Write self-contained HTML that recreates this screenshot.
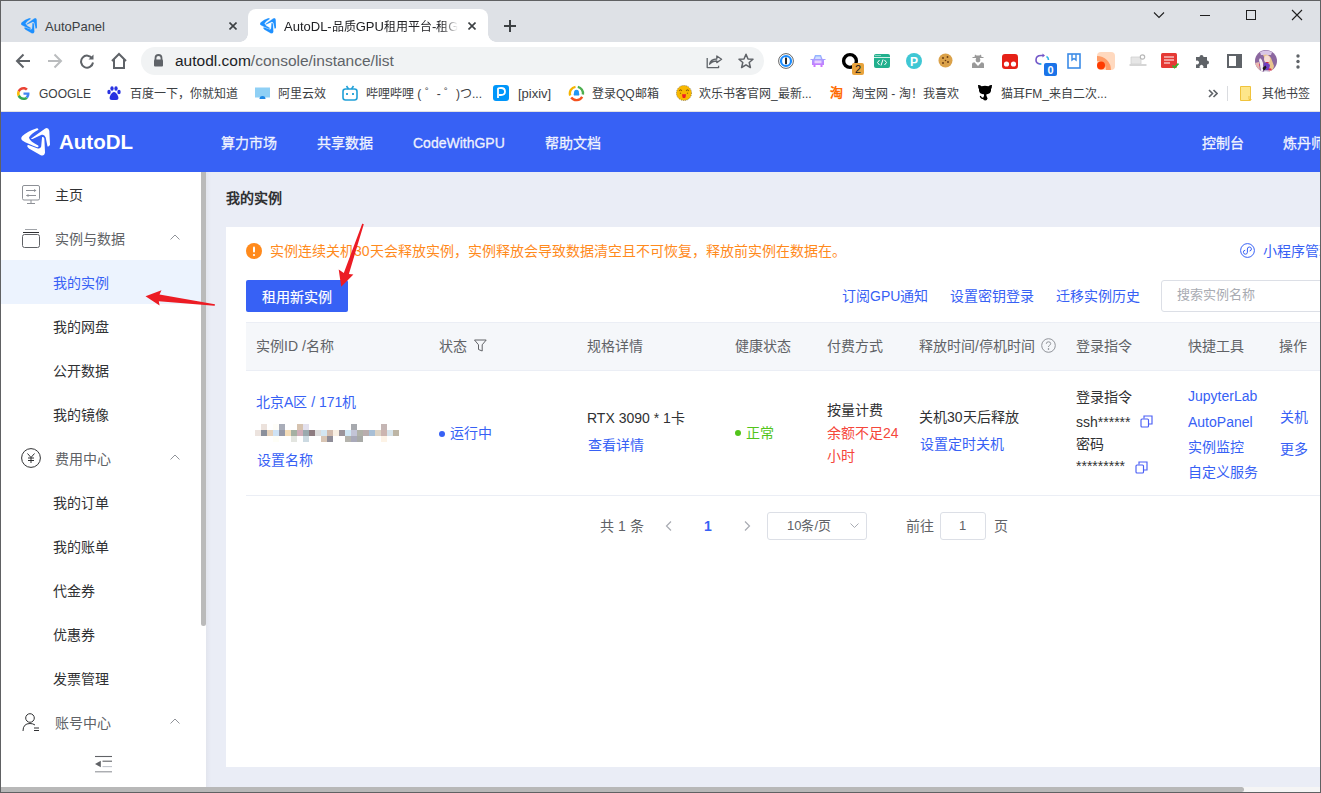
<!DOCTYPE html>
<html lang="zh-CN"><head><meta charset="utf-8">
<style>
*{margin:0;padding:0;box-sizing:border-box}
html,body{width:1321px;height:793px;overflow:hidden;background:#fff;font-family:"Liberation Sans",sans-serif}
.a{position:absolute;white-space:nowrap}
#frame{position:absolute;left:0;top:0;width:1321px;height:793px;border:1px solid #606163;pointer-events:none;z-index:50}
/* tabs */
#tabs{position:absolute;left:0;top:0;width:1321px;height:42px;background:#dee1e6}
.tabtxt{font-size:13px;color:#3c4043;top:19px;line-height:16px}
/* toolbar */
#toolbar{position:absolute;left:0;top:42px;width:1321px;height:36px;background:#fff}
#omni{position:absolute;left:141px;top:47px;width:623px;height:28px;border-radius:14px;background:#f1f3f4}
#bm{position:absolute;left:0;top:78px;width:1321px;height:34px;background:#fff;border-bottom:1px solid #e2e2e2}
.bmt{font-size:12px;color:#3c4043;top:86px;line-height:16px}
/* page */
#hdr{position:absolute;left:0;top:112px;width:1321px;height:60px;background:#3761f5}
.nav{font-size:14px;color:rgba(255,255,255,.88);top:133px;line-height:20px;-webkit-text-stroke:0.35px rgba(255,255,255,.88)}
#side{position:absolute;left:0;top:172px;width:201px;height:621px;background:#fff}
.si{font-size:14px;color:#303133;line-height:20px}
.sg{color:#606266}
#main{position:absolute;left:206px;top:172px;width:1115px;height:621px;background:#eaedf6}
#card{position:absolute;left:226px;top:227px;width:1095px;height:540px;background:#fff}
.t14{font-size:14px;line-height:20px}
.lk{color:#3761f5}
.hd{color:#606266}
.dk{color:#303133}
</style></head><body>
<div id="tabs"></div>
<div id="toolbar"></div>
<div id="omni"></div>
<div id="bm"></div>

<!-- TAB STRIP -->
<svg class="a" style="left:21px;top:18px" width="16" height="16" viewBox="105 90 640 630" fill="#1e90ff" stroke="#1e90ff" stroke-width="10" stroke-linejoin="round"><path d="M440,98 Q485,90 490,128 Q320,215 280,305 Q310,390 485,478 Q505,515 460,512 Q250,440 135,365 Q85,315 135,265 Q250,160 440,98 Z"/><path d="M330,320 L640,100 Q710,70 730,150 L745,460 Q720,515 690,495 L650,300 Q620,220 560,240 L360,330 Q320,340 330,320 Z"/><path d="M245,470 Q230,500 280,540 L540,690 Q620,720 635,630 L620,320 Q600,280 570,290 L550,500 Q530,560 460,535 L270,465 Z"/></svg>
<div class="a tabtxt" style="left:45px">AutoPanel</div>
<svg class="a" style="left:229px;top:22px" width="8" height="8" viewBox="0 0 8 8" stroke="#3c4043" stroke-width="1.6"><path d="M0.5,0.5 L7.5,7.5 M7.5,0.5 L0.5,7.5"/></svg>
<div class="a" style="left:248px;top:9px;width:240px;height:33px;background:#fff;border-radius:8px 8px 0 0"></div>
<div class="a" style="left:240px;top:34px;width:8px;height:8px;background:radial-gradient(circle at 0 0,#dee1e6 7.5px,#fff 8px)"></div>
<div class="a" style="left:488px;top:34px;width:8px;height:8px;background:radial-gradient(circle at 100% 0,#dee1e6 7.5px,#fff 8px)"></div>
<svg class="a" style="left:260px;top:18px" width="16" height="16" viewBox="105 90 640 630" fill="#1e90ff" stroke="#1e90ff" stroke-width="10" stroke-linejoin="round"><path d="M440,98 Q485,90 490,128 Q320,215 280,305 Q310,390 485,478 Q505,515 460,512 Q250,440 135,365 Q85,315 135,265 Q250,160 440,98 Z"/><path d="M330,320 L640,100 Q710,70 730,150 L745,460 Q720,515 690,495 L650,300 Q620,220 560,240 L360,330 Q320,340 330,320 Z"/><path d="M245,470 Q230,500 280,540 L540,690 Q620,720 635,630 L620,320 Q600,280 570,290 L550,500 Q530,560 460,535 L270,465 Z"/></svg>
<div class="a tabtxt" style="left:284px;color:#202124;width:176px;overflow:hidden;-webkit-mask-image:linear-gradient(90deg,#000 158px,transparent 174px)">AutoDL-<span style="font-size:12px">品质</span>GPU<span style="font-size:12px">租用平台</span>-<span style="font-size:12px">租</span>GPU</div>
<svg class="a" style="left:468px;top:22px" width="8" height="8" viewBox="0 0 8 8" stroke="#3c4043" stroke-width="1.6"><path d="M0.5,0.5 L7.5,7.5 M7.5,0.5 L0.5,7.5"/></svg>
<svg class="a" style="left:504px;top:20px" width="12" height="12" viewBox="0 0 12 12" stroke="#3c4043" stroke-width="2"><path d="M6,0 V12 M0,6 H12"/></svg>
<!-- window controls -->
<svg class="a" style="left:1153px;top:11px" width="12" height="8" viewBox="0 0 12 8" fill="none" stroke="#1f1f1f" stroke-width="1.1"><path d="M1,1.5 L6,6.5 L11,1.5"/></svg>
<div class="a" style="left:1200px;top:15px;width:10px;height:1px;background:#1f1f1f"></div>
<div class="a" style="left:1246px;top:10px;width:10px;height:10px;border:1px solid #1f1f1f"></div>
<svg class="a" style="left:1291px;top:9px" width="12" height="12" viewBox="0 0 12 12" stroke="#1f1f1f" stroke-width="1.1"><path d="M1,1 L11,11 M11,1 L1,11"/></svg>
<!-- TOOLBAR -->
<svg class="a" style="left:15px;top:53px" width="16" height="16" viewBox="0 0 16 16" fill="none" stroke="#5f6368" stroke-width="2"><path d="M15,8 H2 M8.5,1.5 L2,8 L8.5,14.5"/></svg>
<svg class="a" style="left:47px;top:53px" width="16" height="16" viewBox="0 0 16 16" fill="none" stroke="#babcbe" stroke-width="2"><path d="M1,8 H14 M7.5,1.5 L14,8 L7.5,14.5"/></svg>
<svg class="a" style="left:79px;top:53px" width="16" height="16" viewBox="0 0 16 16" fill="none" stroke="#5f6368" stroke-width="2"><path d="M13.2,5.5 A6,6 0 1 0 14,9.5"/><path d="M14.5,1.5 V6.5 H9.5 Z" fill="#5f6368" stroke="none"/></svg>
<svg class="a" style="left:110px;top:52px" width="18" height="18" viewBox="0 0 18 18" fill="none" stroke="#5f6368" stroke-width="2"><path d="M2,9 L9,2 L16,9 M4,7.5 V16 H14 V7.5"/></svg>
<svg class="a" style="left:153px;top:54px" width="11" height="13" viewBox="0 0 11 13"><path d="M2.5,6 V4 A3,3 0 0 1 8.5,4 V6" fill="none" stroke="#5f6368" stroke-width="1.8"/><rect x="1" y="5.5" width="9" height="7" rx="1" fill="#5f6368"/></svg>
<div class="a" style="left:175px;top:51px;font-size:15.5px;line-height:20px;color:#5f6368"><span style="color:#202124">autodl.com</span>/console/instance/list</div>
<svg class="a" style="left:705px;top:54px" width="18" height="15" viewBox="0 0 18 15" fill="none" stroke="#5f6368" stroke-width="1.3" stroke-linejoin="round"><path d="M2.2,3.9 V13.6 H13.6 V11.8"/><path d="M4.6,10.2 Q5.5,5.2 11.8,5 V2 L16.6,5.3 L11.8,8.6 V7 Q7,7 4.6,10.2 Z"/></svg>
<svg class="a" style="left:738px;top:53px" width="16" height="16" viewBox="0 0 16 16" fill="none" stroke="#5f6368" stroke-width="1.5" stroke-linejoin="round"><path d="M8,1.2 L10,6 L15,6.3 L11.2,9.5 L12.4,14.5 L8,11.8 L3.6,14.5 L4.8,9.5 L1,6.3 L6,6 Z"/></svg>
<!-- extensions -->
<svg class="a" style="left:778px;top:53px" width="16" height="16" viewBox="0 0 16 16"><circle cx="8" cy="8" r="7.4" fill="#fff" stroke="#555" stroke-width="0.9"/><circle cx="8" cy="8" r="5" fill="#fff" stroke="#1a8cff" stroke-width="2.2"/><rect x="7.1" y="4.6" width="1.8" height="6.6" fill="#111"/></svg>
<svg class="a" style="left:810px;top:54px" width="16" height="14" viewBox="0 0 16 14"><defs><linearGradient id="cg" x1="0" y1="0" x2="0" y2="1"><stop offset="0" stop-color="#8fb8ff"/><stop offset="1" stop-color="#d070ff"/></linearGradient></defs><path d="M3.5,5 L5,1 H11 L12.5,5 H15.5 V6 H14 V11 H12.5 V13 H10.5 V11 H5.5 V13 H3.5 V11 H2 V6 H0.5 V5 Z" fill="url(#cg)"/><path d="M5,5 L5.8,2.5 H10.2 L11,5 Z" fill="#cfe0ff"/><rect x="4.5" y="6.5" width="7" height="2.8" fill="#e9d0ff"/></svg>
<svg class="a" style="left:841px;top:51px" width="23" height="24" viewBox="0 0 23 24"><circle cx="9" cy="10" r="6.4" fill="none" stroke="#000" stroke-width="3.4"/><rect x="11" y="12" width="12" height="12" rx="2" fill="#e8a33d"/><text x="17" y="22" font-size="11" text-anchor="middle" fill="#1a1a1a" font-family="Liberation Sans">2</text></svg>
<svg class="a" style="left:874px;top:53px" width="16" height="16" viewBox="0 0 16 16"><rect x="0" y="1" width="16" height="14" rx="2" fill="#21b08d"/><rect x="0" y="4" width="16" height="0.8" fill="#fff"/><circle cx="2" cy="2.5" r=".6" fill="#fff"/><circle cx="4" cy="2.5" r=".6" fill="#fff"/><circle cx="6" cy="2.5" r=".6" fill="#fff"/><path d="M5.5,7 L3.5,9.5 L5.5,12 M10.5,7 L12.5,9.5 L10.5,12 M9,6.5 L7,12.5" fill="none" stroke="#fff" stroke-width="1"/></svg>
<svg class="a" style="left:906px;top:53px" width="16" height="16" viewBox="0 0 16 16"><circle cx="8" cy="8" r="8" fill="#3fc7d4"/><text x="8" y="12.5" font-size="12" font-weight="bold" text-anchor="middle" fill="#fff" font-family="Liberation Sans">P</text></svg>
<svg class="a" style="left:938px;top:53px" width="15" height="15" viewBox="0 0 15 15"><circle cx="7.5" cy="7.5" r="7" fill="#dba24a"/><circle cx="5" cy="5" r="1" fill="#6b3d14"/><circle cx="9.5" cy="4" r=".9" fill="#6b3d14"/><circle cx="10" cy="9" r="1" fill="#6b3d14"/><circle cx="5" cy="10" r="1" fill="#6b3d14"/><circle cx="7.5" cy="7.5" r=".8" fill="#6b3d14"/></svg>
<svg class="a" style="left:971px;top:54px" width="14" height="14" viewBox="0 0 14 14" fill="#999"><path d="M4,0.5 L5.5,1.5 H8.5 L10,0.5 L10.5,3 H12.5 V4 H1.5 V3 H3.5 Z"/><circle cx="7" cy="6" r="2.4"/><path d="M1,14 V10 Q1,8.5 3.5,8.3 L7,12 L10.5,8.3 Q13,8.5 13,10 V14 Z"/></svg>
<svg class="a" style="left:1002px;top:54px" width="16" height="15" viewBox="0 0 16 15"><rect x="0" y="0" width="16" height="15" rx="3" fill="#e62117"/><circle cx="4.5" cy="10" r="2.6" fill="#fff"/><circle cx="11.5" cy="10" r="2.6" fill="#fff"/></svg>
<svg class="a" style="left:1034px;top:52px" width="23" height="24" viewBox="0 0 23 24"><path d="M9,3.5 H7 Q2,3.5 2,8 Q2,11.5 6,12" fill="none" stroke="#7357c8" stroke-width="1.6"/><path d="M8.5,1.5 L11,3.5 L8.5,5.5 Z" fill="#7357c8"/><path d="M12.5,4.5 Q14.5,5.5 14.5,8" fill="none" stroke="#2bb5e8" stroke-width="1.6"/><circle cx="6.5" cy="12" r="1.1" fill="#2bb5e8"/><rect x="10" y="11" width="13" height="13" rx="2" fill="#1a73e8"/><text x="16.5" y="22" font-size="11" font-weight="bold" text-anchor="middle" fill="#fff" font-family="Liberation Sans">0</text></svg>
<svg class="a" style="left:1067px;top:53px" width="14" height="16" viewBox="0 0 14 16"><rect x="1" y="1" width="12" height="14" fill="none" stroke="#3b8be6" stroke-width="1.6"/><path d="M5,1 V7 L7,5.5 L9,7 V1" fill="none" stroke="#3b8be6" stroke-width="1.4"/></svg>
<svg class="a" style="left:1097px;top:52px" width="18" height="18" viewBox="0 0 18 18"><rect x="0" y="0" width="18" height="18" rx="4" fill="#ffd9bf"/><path d="M0,4 A14,14 0 0 1 14,18 H9 A9,9 0 0 0 0,9 Z" fill="#ff9c66"/><circle cx="4" cy="13.5" r="4" fill="#ff3b00"/></svg>
<svg class="a" style="left:1129px;top:54px" width="18" height="14" viewBox="0 0 18 14"><path d="M2,3 H12 V10 H2 Z" fill="#e6e6e6" stroke="#d0d0d0" stroke-width=".8"/><path d="M0.5,10 H17.5 V12 H0.5 Z" fill="#d6d6d6"/><circle cx="13.5" cy="3" r="2.2" fill="#fff" stroke="#b8b8b8" stroke-width="1.2"/></svg>
<svg class="a" style="left:1161px;top:53px" width="18" height="16" viewBox="0 0 18 16"><rect x="0" y="0" width="16" height="15" rx="1.5" fill="#e53935"/><path d="M3,4 H13 M3,7 H13 M3,10 H9" stroke="#fff" stroke-width="1.2"/><path d="M11.5,12.5 L13.5,14.5 L17.5,10.5" fill="none" stroke="#2eb82e" stroke-width="1.6"/></svg>
<svg class="a" style="left:1194px;top:53px" width="16" height="16" viewBox="0 0 16 16"><path d="M2,4 H5.5 A2,2 0 1 1 9.5,4 H13 V7.5 A2,2 0 1 1 13,11.5 V15 H9.2 A2,2 0 1 0 5.8,15 H2 V11.2 A2,2 0 1 0 2,7.8 Z" fill="#5f6368"/></svg>
<svg class="a" style="left:1227px;top:54px" width="15" height="14" viewBox="0 0 15 14"><rect x="1" y="1" width="13" height="12" fill="none" stroke="#5f6368" stroke-width="2"/><rect x="9" y="1" width="5" height="12" fill="#5f6368"/></svg>
<svg class="a" style="left:1255px;top:50px" width="22" height="22" viewBox="0 0 22 22"><defs><clipPath id="avc"><circle cx="11" cy="11" r="11"/></clipPath></defs><g clip-path="url(#avc)"><rect width="22" height="22" fill="#8b679f"/><path d="M5,2 Q11,-1 17,2 L16,5 H6 Z" fill="#d9c6e6"/><path d="M8,5 Q13,3 16,8 L19,16 Q18,21 15,22 L13,14 Z" fill="#e8c48e"/><ellipse cx="12" cy="9" rx="3" ry="3.6" fill="#f6dcd2"/><rect x="11" y="12" width="2.6" height="1" fill="#d22a4a"/><path d="M9,13 Q13,12 15,15 L14,20 H9 Z" fill="#6f3fc0"/><path d="M5,8 Q7,9 8,13 L8,21 L6,21 Q5,14 4,10 Z" fill="#f4f0f4"/><path d="M7.5,18 L10.5,15.5 L11.5,17.5 L9,21 Z" fill="#1a1a1a"/><circle cx="3.5" cy="15" r="1.6" fill="#d8204a"/><circle cx="15" cy="20" r="1.7" fill="#e0284a"/><path d="M9,22 H17 V20.5 H9 Z" fill="#f0f0f8"/><path d="M0,13 L4,12 L5,22 H0 Z" fill="#e8b8b0"/></g></svg>
<svg class="a" style="left:1295px;top:54px" width="6" height="15" viewBox="0 0 6 15" fill="#5f6368"><circle cx="3" cy="2" r="1.7"/><circle cx="3" cy="7.5" r="1.7"/><circle cx="3" cy="13" r="1.7"/></svg>
<!-- BOOKMARKS -->
<svg class="a" style="left:17px;top:87px" width="13" height="13" viewBox="0 0 48 48"><path fill="#EA4335" d="M24 9.5c3.5 0 6.6 1.2 9.1 3.6l6.8-6.8C35.8 2.5 30.3 0 24 0 14.6 0 6.6 5.4 2.6 13.3l7.9 6.1C12.4 13.7 17.7 9.5 24 9.5z"/><path fill="#4285F4" d="M46.1 24.6c0-1.6-.1-3.1-.4-4.6H24v9h12.4c-.5 2.9-2.2 5.3-4.6 6.9l7.4 5.7c4.3-4 6.9-9.9 6.9-17z"/><path fill="#FBBC05" d="M10.5 28.6c-.5-1.4-.8-3-.8-4.6s.3-3.2.8-4.6l-7.9-6.1C1 16.5 0 20.1 0 24s1 7.5 2.6 10.7l7.9-6.1z"/><path fill="#34A853" d="M24 48c6.5 0 11.9-2.1 15.9-5.8l-7.4-5.7c-2.1 1.4-4.8 2.2-8.5 2.2-6.3 0-11.6-4.2-13.5-9.9l-7.9 6.1C6.6 42.6 14.6 48 24 48z"/></svg>
<div class="a bmt" style="left:39px">GOOGLE</div>
<svg class="a" style="left:107px;top:86px" width="14" height="15" viewBox="0 0 14 15" fill="#2932e1"><ellipse cx="2" cy="6" rx="1.7" ry="2.2"/><ellipse cx="5" cy="2.5" rx="1.7" ry="2.2"/><ellipse cx="9" cy="2.5" rx="1.7" ry="2.2"/><ellipse cx="12" cy="6" rx="1.7" ry="2.2"/><path d="M7,6 Q9,6 11,10 Q12.5,14 9,14 H5 Q1.5,14 3,10 Q5,6 7,6 Z"/></svg>
<div class="a bmt" style="left:130px">百度一下，你就知道</div>
<svg class="a" style="left:255px;top:87px" width="15" height="13" viewBox="0 0 15 13"><rect x="0" y="0.5" width="15" height="10" fill="#8fd0f5"/><path d="M4.5,12 A3,3 0 0 1 10.5,12 Z" fill="#1e88e5"/></svg>
<div class="a bmt" style="left:278px">阿里云效</div>
<svg class="a" style="left:342px;top:85px" width="16" height="16" viewBox="0 0 16 16" fill="none" stroke="#20a0d8" stroke-width="1.6"><rect x="1" y="4" width="14" height="11" rx="2.5"/><path d="M4.5,1 L6.5,4 M11.5,1 L9.5,4"/><path d="M5,8 V10 M11,8 V10" stroke-width="1.8"/></svg>
<div class="a bmt" style="left:366px">哔哩哔哩 ( ゜- ゜)つ...</div>
<svg class="a" style="left:493px;top:85px" width="16" height="16" viewBox="0 0 16 16"><rect width="16" height="16" rx="3" fill="#0096fa"/><path d="M5,13 V4 Q5,3 8,3 Q12,3 12,6.5 Q12,10 8,10 H6" fill="none" stroke="#fff" stroke-width="1.8"/></svg>
<div class="a bmt" style="left:518px;font-size:13px">[pixiv]</div>
<svg class="a" style="left:568px;top:85px" width="17" height="17" viewBox="0 0 17 17" fill="none" stroke-width="2.4"><path d="M2.2,10.5 A6.6,6.6 0 0 1 7.5,1.9" stroke="#f5b400"/><path d="M9.8,1.9 A6.6,6.6 0 0 1 14.9,9.5" stroke="#4caf50"/><path d="M14.2,11.8 A6.6,6.6 0 0 1 3.2,12.5" stroke="#f4511e"/><path d="M8.5,4.8 Q11,4.8 11,8 Q11.8,9.5 11,10.5 H6 Q5.2,9.5 6,8 Q6,4.8 8.5,4.8 Z" fill="#2196f3" stroke="none"/></svg>
<div class="a bmt" style="left:592px">登录QQ邮箱</div>
<svg class="a" style="left:676px;top:85px" width="16" height="16" viewBox="0 0 16 16"><circle cx="8" cy="8" r="7.6" fill="#f8b800" stroke="#5a4a20" stroke-width=".6" stroke-dasharray="1 1"/><path d="M3.3,6 Q4.5,3.5 5.8,6 M10.2,6 Q11.5,3.5 12.7,6" fill="none" stroke="#8a5a00" stroke-width="1.1"/><circle cx="4.5" cy="8.2" r=".7" fill="#a07000"/><circle cx="11.5" cy="8.2" r=".7" fill="#a07000"/><path d="M6,9.3 H10 L9.5,12.5 Q8,13.6 6.5,12.5 Z" fill="#ee1c25"/></svg>
<div class="a bmt" style="left:699px">欢乐书客官网_最新...</div>
<div class="a" style="left:830px;top:85px;font-size:13px;line-height:16px;color:#ff6a00;font-weight:bold">淘</div>
<div class="a bmt" style="left:852px">淘宝网 - 淘！我喜欢</div>
<svg class="a" style="left:977px;top:84px" width="16" height="17" viewBox="0 0 16 17" fill="#000"><path d="M1,1 Q3,0.8 4.5,2.2 Q8,1.5 11.5,2.2 Q13,0.8 15,1 Q15,4 14,5 Q15,10 8,10.5 Q1,10 2,5 Q1,4 1,1 Z"/><rect x="7" y="10" width="2.4" height="3"/><ellipse cx="8.2" cy="14.2" rx="2.2" ry="2.3"/><path d="M3.2,12 Q4,14.5 6.5,14.5" fill="none" stroke="#000" stroke-width="1.1"/></svg>
<div class="a bmt" style="left:1001px">猫耳FM_来自二次...</div>
<svg class="a" style="left:1208px;top:89px" width="10" height="9" viewBox="0 0 10 9" fill="none" stroke="#5f6368" stroke-width="1.6"><path d="M1,1 L4.5,4.5 L1,8 M5.5,1 L9,4.5 L5.5,8"/></svg>
<div class="a" style="left:1227px;top:86px;width:1px;height:15px;background:#dadce0"></div>
<svg class="a" style="left:1240px;top:86px" width="12" height="15" viewBox="0 0 12 15"><path d="M0.5,0.5 H10.5 V14.5 H0.5 Z" fill="#fde68a" stroke="#f0c33c" stroke-width="1"/><path d="M9,10 V13.5 H11.5" fill="none" stroke="#f0c33c" stroke-width="1"/></svg>
<div class="a bmt" style="left:1262px">其他书签</div>


<div id="hdr"></div>
<svg class="a" style="left:21px;top:128px" width="29" height="28.6" viewBox="105 90 640 630" fill="#fff"><path d="M440,98 Q485,90 490,128 Q320,215 280,305 Q310,390 485,478 Q505,515 460,512 Q250,440 135,365 Q85,315 135,265 Q250,160 440,98 Z"/><path d="M330,320 L640,100 Q710,70 730,150 L745,460 Q720,515 690,495 L650,300 Q620,220 560,240 L360,330 Q320,340 330,320 Z"/><path d="M245,470 Q230,500 280,540 L540,690 Q620,720 635,630 L620,320 Q600,280 570,290 L550,500 Q530,560 460,535 L270,465 Z"/></svg>
<div class="a" style="left:59px;top:130px;font-size:20.5px;line-height:24px;font-weight:bold;color:#fff">AutoDL</div>
<div class="a nav" style="left:221px">算力市场</div>
<div class="a nav" style="left:317px">共享数据</div>
<div class="a nav" style="left:413px">CodeWithGPU</div>
<div class="a nav" style="left:545px">帮助文档</div>
<div class="a nav" style="left:1202px">控制台</div>
<div class="a nav" style="left:1283px">炼丹师</div>
<div id="side"></div>
<div class="a" style="left:1px;top:260px;width:200px;height:44px;background:#ecf3fe"></div>
<svg class="a" style="left:22px;top:185px" width="18" height="19" viewBox="0 0 18 19" fill="none" stroke="#8d9096" stroke-width="1"><rect x="0.5" y="0.5" width="17" height="14.5" rx="1.5"/><path d="M9,15 V18 M5,18.5 H13"/><path d="M4,5.5 H13.5 M4.5,10.5 H14"/><path d="M12,4 L14.5,5.5 L12,7 Z M6.5,9 L4,10.5 L6.5,12 Z" fill="#8d9096" stroke="none"/></svg><svg class="a" style="left:22px;top:228px" width="18" height="20" viewBox="0 0 18 20" fill="none" stroke-width="1"><path d="M3,1.5 H15" stroke="#a0a3a8"/><path d="M1,4.5 H17" stroke="#303133"/><rect x="0.5" y="6.5" width="17" height="13" rx="2" stroke="#606266"/></svg><svg class="a" style="left:21px;top:448px" width="20" height="20" viewBox="0 0 20 20" fill="none" stroke="#303133" stroke-width="1"><circle cx="10" cy="10" r="9.4"/><path d="M6.5,5.5 L10,9.5 L13.5,5.5 M10,9.5 V15 M7,10 H13 M7,12.5 H13"/></svg><svg class="a" style="left:22px;top:713px" width="19" height="19" viewBox="0 0 19 19" fill="none" stroke="#303133" stroke-width="1"><circle cx="8" cy="5" r="4.3"/><path d="M1,18 Q1,10.5 8,10.5 Q11,10.5 13,12"/><path d="M12,15 H17 M12,17.5 H17"/></svg>
<svg class="a" style="left:170px;top:234px" width="10" height="6" viewBox="0 0 10 6" fill="none" stroke="#909399" stroke-width="1"><path d="M0.5,5.5 L5,1 L9.5,5.5"/></svg><svg class="a" style="left:170px;top:454px" width="10" height="6" viewBox="0 0 10 6" fill="none" stroke="#909399" stroke-width="1"><path d="M0.5,5.5 L5,1 L9.5,5.5"/></svg><svg class="a" style="left:170px;top:718px" width="10" height="6" viewBox="0 0 10 6" fill="none" stroke="#909399" stroke-width="1"><path d="M0.5,5.5 L5,1 L9.5,5.5"/></svg>
<div class="a si" style="left:55px;top:185px">主页</div><div class="a si sg" style="left:55px;top:229px">实例与数据</div><div class="a si" style="left:53px;top:273px;color:#3761f5">我的实例</div><div class="a si" style="left:53px;top:317px">我的网盘</div><div class="a si" style="left:53px;top:361px">公开数据</div><div class="a si" style="left:53px;top:405px">我的镜像</div><div class="a si sg" style="left:55px;top:449px">费用中心</div><div class="a si" style="left:53px;top:493px">我的订单</div><div class="a si" style="left:53px;top:537px">我的账单</div><div class="a si" style="left:53px;top:581px">代金券</div><div class="a si" style="left:53px;top:625px">优惠券</div><div class="a si" style="left:53px;top:669px">发票管理</div><div class="a si sg" style="left:55px;top:713px">账号中心</div>
<svg class="a" style="left:95px;top:755px" width="17" height="18" viewBox="0 0 17 18"><path d="M0,1.5 H17" stroke="#606266" stroke-width="1.1"/><path d="M7.5,6.2 H17" stroke="#606266" stroke-width="1.1"/><path d="M7.5,11.6 H17" stroke="#c0c4cc" stroke-width="1.1"/><path d="M0,16.8 H17" stroke="#909399" stroke-width="1.1"/><path d="M0,9 L5.8,5.8 V12.2 Z" fill="#606266"/></svg>
<div class="a" style="left:201px;top:172px;width:5px;height:454px;background:#bababa;border-radius:0 0 3px 3px"></div>
<div id="main"></div>
<div class="a" style="left:206px;top:172px;width:5px;height:621px;background:linear-gradient(90deg,rgba(0,0,0,.035),rgba(0,0,0,0))"></div>
<div class="a" style="left:226px;top:188px;font-size:14px;line-height:20px;font-weight:bold;color:#303133">我的实例</div>
<div id="card"></div>
<svg class="a" style="left:246px;top:243px" width="16" height="16" viewBox="0 0 16 16"><circle cx="8" cy="8" r="8" fill="#ff8a1c"/><rect x="7" y="3.5" width="2" height="6" rx="1" fill="#fff"/><circle cx="8" cy="12" r="1.1" fill="#fff"/></svg>
<div class="a t14" style="left:270px;top:241px;color:#ff8a1c">实例连续关机30天会释放实例，实例释放会导致数据清空且不可恢复，释放前实例在数据在。</div>
<svg class="a" style="left:1240px;top:243px" width="15" height="15" viewBox="0 0 15 15" fill="none" stroke="#3761f5" stroke-width="1"><circle cx="7.5" cy="7.5" r="6.9"/><path d="M5.2,7.2 A2,2 0 1 0 7.4,9.2 V6 A2,2 0 1 1 9.6,8"/></svg>
<div class="a t14 lk" style="left:1263px;top:241px">小程序管理</div>
<div class="a" style="left:246px;top:280px;width:102px;height:32px;background:#3761f5;border-radius:2px"></div>
<div class="a t14" style="left:262px;top:287px;color:#fff;-webkit-text-stroke:0.2px #fff">租用新实例</div>
<div class="a t14 lk" style="left:842px;top:286px">订阅GPU通知</div>
<div class="a t14 lk" style="left:950px;top:286px">设置密钥登录</div>
<div class="a t14 lk" style="left:1056px;top:286px">迁移实例历史</div>
<div class="a" style="left:1161px;top:280px;width:170px;height:32px;border:1px solid #dcdfe6;border-radius:3px;background:#fff"></div>
<div class="a" style="left:1177px;top:285px;font-size:13px;line-height:20px;color:#a8abb2">搜索实例名称</div>
<!-- table -->
<div class="a" style="left:246px;top:322px;width:1080px;height:49px;background:#f5f7fa;border-top:1px solid #ebeef5;border-bottom:1px solid #ebeef5"></div>
<div class="a t14 hd" style="left:256px;top:336px">实例ID /名称</div>
<div class="a t14 hd" style="left:439px;top:336px">状态</div>
<svg class="a" style="left:474px;top:339px" width="13" height="13" viewBox="0 0 13 13" fill="none" stroke="#606266" stroke-width="1"><path d="M0.5,1 H12.2 L8.2,5.8 V12 L4.5,10.5 V5.8 Z" stroke-linejoin="round"/></svg>
<div class="a t14 hd" style="left:587px;top:336px">规格详情</div>
<div class="a t14 hd" style="left:735px;top:336px">健康状态</div>
<div class="a t14 hd" style="left:827px;top:336px">付费方式</div>
<div class="a t14 hd" style="left:919px;top:336px">释放时间/停机时间</div>
<svg class="a" style="left:1041px;top:338px" width="15" height="15" viewBox="0 0 15 15" fill="none" stroke="#909399" stroke-width="1"><circle cx="7.5" cy="7.5" r="6.8"/><path d="M5.3,5.8 Q5.3,3.8 7.5,3.8 Q9.7,3.8 9.7,5.6 Q9.7,6.8 8.3,7.5 Q7.5,7.9 7.5,9"/><circle cx="7.5" cy="11" r=".5" fill="#909399"/></svg>
<div class="a t14 hd" style="left:1076px;top:336px">登录指令</div>
<div class="a t14 hd" style="left:1188px;top:336px">快捷工具</div>
<div class="a t14 hd" style="left:1279px;top:336px">操作</div>
<div class="a" style="left:246px;top:495px;width:1080px;height:1px;background:#ebeef5"></div>
<div class="a t14 lk" style="left:256px;top:392px">北京A区 / 171机</div>
<svg class="a" style="left:255px;top:424px" width="144" height="18" viewBox="0 0 144 18" shape-rendering="crispEdges"><rect x="6" y="0" width="6" height="6" fill="#ece2dc"/><rect x="18" y="0" width="6" height="6" fill="#fefdf8"/><rect x="24" y="0" width="6" height="6" fill="#a9adb9"/><rect x="42" y="0" width="6" height="6" fill="#d6c3b0"/><rect x="48" y="0" width="6" height="6" fill="#e3e1ee"/><rect x="96" y="0" width="6" height="6" fill="#a7a9ae"/><rect x="126" y="0" width="6" height="6" fill="#c5b6b4"/><rect x="0" y="6" width="6" height="6" fill="#ece3de"/><rect x="6" y="6" width="6" height="6" fill="#8a8f9b"/><rect x="12" y="6" width="6" height="6" fill="#e6d2bb"/><rect x="18" y="6" width="6" height="6" fill="#cfe3f5"/><rect x="24" y="6" width="6" height="6" fill="#9699a8"/><rect x="30" y="6" width="6" height="6" fill="#f3dcb8"/><rect x="36" y="6" width="6" height="6" fill="#a5b0a3"/><rect x="42" y="6" width="6" height="6" fill="#cfadb9"/><rect x="48" y="6" width="6" height="6" fill="#9aa9ae"/><rect x="54" y="6" width="6" height="6" fill="#8d7b80"/><rect x="60" y="6" width="6" height="6" fill="#dcdcdc"/><rect x="66" y="6" width="6" height="6" fill="#d3e6f2"/><rect x="72" y="6" width="6" height="6" fill="#d2bcae"/><rect x="78" y="6" width="6" height="6" fill="#f8efe3"/><rect x="84" y="6" width="6" height="6" fill="#9a949b"/><rect x="90" y="6" width="6" height="6" fill="#cfe6f4"/><rect x="96" y="6" width="6" height="6" fill="#c3c4d6"/><rect x="102" y="6" width="6" height="6" fill="#b0b1a8"/><rect x="108" y="6" width="6" height="6" fill="#b9adad"/><rect x="114" y="6" width="6" height="6" fill="#a8bfd6"/><rect x="120" y="6" width="6" height="6" fill="#ddd3c4"/><rect x="126" y="6" width="6" height="6" fill="#ccb5b0"/><rect x="132" y="6" width="6" height="6" fill="#d6e3ea"/><rect x="138" y="6" width="6" height="6" fill="#bdb5a5"/><rect x="18" y="12" width="6" height="6" fill="#fefef7"/><rect x="36" y="12" width="6" height="6" fill="#e3e5e0"/><rect x="48" y="12" width="6" height="6" fill="#ccdae2"/><rect x="66" y="12" width="6" height="6" fill="#d8c5b4"/><rect x="72" y="12" width="6" height="6" fill="#8f8d98"/><rect x="90" y="12" width="6" height="6" fill="#b4b3ad"/><rect x="96" y="12" width="6" height="6" fill="#a9a9b9"/><rect x="102" y="12" width="6" height="6" fill="#a8aaa7"/><rect x="126" y="12" width="6" height="6" fill="#fdf3e6"/></svg>
<div class="a t14 lk" style="left:257px;top:450px">设置名称</div>
<div class="a" style="left:439px;top:431px;width:6px;height:6px;border-radius:50%;background:#3761f5"></div>
<div class="a t14 lk" style="left:450px;top:423px">运行中</div>
<div class="a t14 dk" style="left:587px;top:408px">RTX 3090 * 1卡</div>
<div class="a t14 lk" style="left:588px;top:435px">查看详情</div>
<div class="a" style="left:735px;top:430px;width:6px;height:6px;border-radius:50%;background:#52c41a"></div>
<div class="a t14" style="left:746px;top:423px;color:#52c41a">正常</div>
<div class="a t14 dk" style="left:827px;top:400px">按量计费</div>
<div class="a t14" style="left:827px;top:423px;color:#f5473b">余额不足24</div>
<div class="a t14" style="left:827px;top:446px;color:#f5473b">小时</div>
<div class="a t14 dk" style="left:919px;top:407px">关机30天后释放</div>
<div class="a t14 lk" style="left:920px;top:434px">设置定时关机</div>
<div class="a t14 dk" style="left:1076px;top:387px">登录指令</div>
<div class="a t14 dk" style="left:1076px;top:412px">ssh******</div>
<div class="a t14 dk" style="left:1076px;top:434px">密码</div>
<div class="a t14 dk" style="left:1076px;top:456px">*********</div>
<svg class="a" style="left:1140px;top:415px" width="13" height="13" viewBox="0 0 13 13" fill="none" stroke="#4a5ff5" stroke-width="1.15"><rect x="1" y="4" width="7.5" height="8" rx="1"/><path d="M4,3.5 V1 H12 V9 H9"/></svg>
<svg class="a" style="left:1135px;top:461px" width="13" height="13" viewBox="0 0 13 13" fill="none" stroke="#4a5ff5" stroke-width="1.15"><rect x="1" y="4" width="7.5" height="8" rx="1"/><path d="M4,3.5 V1 H12 V9 H9"/></svg>
<div class="a t14 lk" style="left:1188px;top:386px">JupyterLab</div>
<div class="a t14 lk" style="left:1188px;top:412px">AutoPanel</div>
<div class="a t14 lk" style="left:1188px;top:437px">实例监控</div>
<div class="a t14 lk" style="left:1188px;top:462px">自定义服务</div>
<div class="a t14 lk" style="left:1280px;top:407px">关机</div>
<div class="a t14 lk" style="left:1280px;top:439px">更多</div>
<!-- pagination -->
<div class="a" style="left:600px;top:516px;font-size:14px;line-height:20px;color:#606266">共 1 条</div>
<svg class="a" style="left:665px;top:521px" width="7" height="10" viewBox="0 0 7 10" fill="none" stroke="#a8abb2" stroke-width="1.2"><path d="M6,0.5 L1.5,5 L6,9.5"/></svg>
<div class="a" style="left:704px;top:516px;font-size:14px;line-height:20px;color:#3761f5;font-weight:bold">1</div>
<svg class="a" style="left:744px;top:521px" width="7" height="10" viewBox="0 0 7 10" fill="none" stroke="#a8abb2" stroke-width="1.2"><path d="M1,0.5 L5.5,5 L1,9.5"/></svg>
<div class="a" style="left:767px;top:512px;width:100px;height:28px;border:1px solid #dcdfe6;border-radius:3px"></div>
<div class="a" style="left:787px;top:516px;font-size:13px;line-height:20px;color:#606266">10条/页</div>
<svg class="a" style="left:850px;top:523px" width="9" height="5" viewBox="0 0 9 5" fill="none" stroke="#a8abb2" stroke-width="1"><path d="M0.5,0.5 L4.5,4.5 L8.5,0.5"/></svg>
<div class="a" style="left:906px;top:516px;font-size:14px;line-height:20px;color:#606266">前往</div>
<div class="a" style="left:940px;top:512px;width:46px;height:28px;border:1px solid #dcdfe6;border-radius:3px"></div>
<div class="a" style="left:959px;top:516px;font-size:13px;line-height:20px;color:#606266">1</div>
<div class="a" style="left:994px;top:516px;font-size:14px;line-height:20px;color:#606266">页</div>
<!-- arrows -->
<svg class="a" style="left:0;top:0;z-index:10" width="1321" height="793" viewBox="0 0 1321 793">
<path d="M145.5,296.2 L161.5,290.3 L159.5,294.6 L214.8,304.2 Q215.8,305.4 214.2,305.8 L158.8,301.2 L159.6,305.6 Z" fill="#ec1c24"/>
<path d="M363.8,224.2 L348.9,273.9 L353.4,274.4 L341.2,286.8 L338.7,269.6 L343.8,272.9 L362.2,223.8 Q363.2,223.4 363.8,224.2 Z" fill="#ec1c24"/>
</svg>
<!-- bottom scrollbar -->
<div class="a" style="left:1px;top:787px;width:1319px;height:5px;background:#f5f5f5"></div>
<div class="a" style="left:1px;top:787px;width:1243px;height:5px;background:#b8b8b8;border-radius:0 3px 3px 0"></div>

<div id="frame"></div>
</body></html>
